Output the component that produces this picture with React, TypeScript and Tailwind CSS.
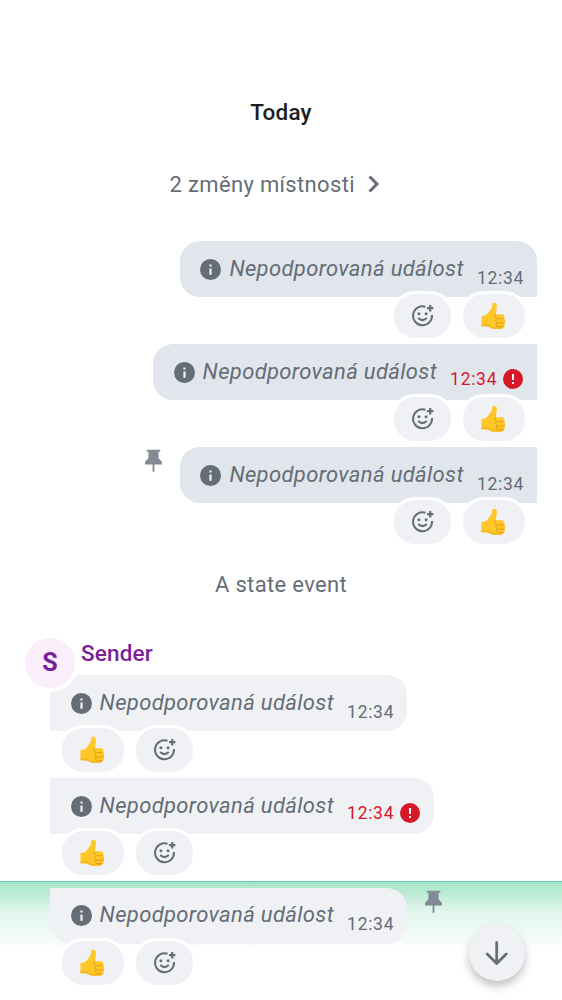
import React from 'react';

const Smile = () => (
  <svg className="h-6 w-6" viewBox="0 0 24 24" fill="none" stroke="#656d77" strokeWidth="2">
    <path d="M14.5 2.7A9.5 9.5 0 1 0 21 11" />
    <circle cx="7.9" cy="9.8" r="1.5" fill="#656d77" stroke="none" />
    <circle cx="15.1" cy="9.8" r="1.5" fill="#656d77" stroke="none" />
    <path d="M7.2 14q4.3 4.2 8.6 0" />
    <path d="M19.2 1v6.4M16 4.2h6.4" strokeWidth="2.2" />
  </svg>
);

const Thumb = () => (
  <svg className="h-8 w-8" viewBox="0 0 32 32" role="img" aria-label="👍">
    <path d="M3.5 16c2.8 0 5-.8 6.3-2.7 1.5-2.2 3.5-4 4-6.3l.6-3c.4-1.7 3.8-1.6 4.3.7.5 2.6-.3 5.8-.9 9.5h5.4c2 0 3.2.9 3.2 2.2 0 .8-.4 1.4-.9 1.8 1.3.6 1.9 1.4 1.9 2.5 0 1-.5 1.8-1.2 2.2.7.5.9 1.2.7 2-.2.9-.8 1.4-1.6 1.7.3 1.5-.8 2.1-2.6 2.1H16c-3 0-4.6-2.2-7.3-2.5H3.5z" fill="#ffc727" />
    <path d="M3.5 24.5v1.7h5.2c2.7.3 4.3 2.5 7.3 2.5h6.7c1.8 0 2.9-.6 2.6-2.1-1.8 1-6 .8-8.8.7-2.8 0-4.8-2.6-7.5-2.8z" fill="#f6b51e" />
    <path d="M17.8 14.2c-.7.7-1.2 1.4-1.2 2.3M26 18.2c-2 .8-5.2.7-6.5.3-1.1-.3-2-.7-2-1.4M26.4 22.8c-2 .7-5.3.7-7.2.1M25.5 26.4c-1.9.4-4.6.3-6.3-.2M18.8 18.6c-1.3.8-1.3 3.3.4 4.3-1.2.8-1 2.7 0 3.3" fill="none" stroke="#e49c13" strokeWidth="1" strokeLinecap="round" />
  </svg>
);

const Pin = () => (
  <svg className="h-[27px] w-[27px] shrink-0" viewBox="0 0 24 24" fill="#818a95">
    <path d="M6 2.5h12v1.7h-1.5V10l3 3v2.5h-6.7V22h-1.6v-6.5H4.5V13l3-3V4.2H6z" />
  </svg>
);

const Info = () => (
  <svg className="h-[21px] w-[21px] shrink-0" viewBox="0 0 21 21">
    <circle cx="10.5" cy="10.5" r="10.5" fill="#656d77" />
    <path d="M9.4 9.4h2.2v6.3H9.4zM9.4 5.4h2.2v2.1H9.4z" fill="#f0f1f5" />
  </svg>
);

const Alert = () => (
  <svg className="ml-[5.5px] h-5 w-5" viewBox="0 0 20 20">
    <circle cx="10" cy="10" r="10" fill="#d51928" />
    <path d="M9 5h2v6H9zM9 13h2v2H9z" fill="#f0f1f5" />
  </svg>
);

type Props = { mine?: boolean; failed?: boolean; pinned?: boolean; corners: string };

function Message({ mine, failed, pinned, corners }: Props) {
  return (
    <div className={`flex h-[103px] flex-col ${mine ? 'items-end pr-[25px]' : 'items-start pl-[50px]'}`}>
      <div className={`flex h-14 shrink-0 items-start ${mine ? '' : 'flex-row-reverse'}`}>
        {pinned && <div className={mine ? 'mr-[13.5px]' : 'ml-[13px]'}><Pin /></div>}
        <div className={`flex h-14 items-center ${failed ? 'w-[384px]' : 'w-[357px]'} ${corners} ${mine ? 'bg-[#e1e5ec]' : 'bg-[#f0f1f5]'} ${mine && !failed ? 'pl-[20.4px]' : 'pl-[20.6px]'}`}>
          <Info />
          <span className="ml-2 w-[247.5px] whitespace-nowrap pb-px text-[22px] italic leading-7 tracking-[0.34px] text-[#656d77]">Nepodporovaná událost</span>
          <span className={`flex items-center text-[17.5px] leading-5 tracking-[0.7px] ${failed ? 'pt-[13px] text-[#d51928]' : 'pt-[17px] text-[#656d77]'}`}>
            12:34{failed && <Alert />}
          </span>
        </div>
      </div>
      <div className={`relative -mt-[6px] flex gap-[6px] ${mine ? 'mr-[9px] flex-row-reverse' : 'ml-[9px]'}`}>
        <div className="flex h-[50px] w-[68px] items-center justify-center rounded-[24px] border-[3.5px] border-white bg-[#f0f1f5]"><Thumb /></div>
        <div className="flex h-[50px] w-[63px] items-center justify-center rounded-[24px] border-[3.5px] border-white bg-[#f0f1f5]"><Smile /></div>
      </div>
    </div>
  );
}

export default function App() {
  return (
    <main className="relative flex h-[1000px] w-[562px] flex-col overflow-hidden bg-white font-['Roboto','Noto_Sans',sans-serif]">
      <h1 className="mt-[98px] text-center text-[22.5px] font-medium leading-7 tracking-[0.2px] text-[#1b1d22]">Today</h1>
      <div className="mt-11 flex h-7 items-center pl-[169.5px] text-[22px] tracking-[0.34px] text-[#656d77]">
        2 změny místnosti
        <svg className="ml-3 h-[18px] w-[14px]" viewBox="0 0 14 18" fill="none" stroke="#656d77" strokeWidth="3"><path d="m2.5 1.5 7.5 7.5-7.5 7.5" /></svg>
      </div>
      <section className="mt-[43px]">
        <Message mine corners="rounded-t-[20px] rounded-bl-[20px]" />
        <Message mine failed corners="rounded-l-[20px]" />
        <Message mine pinned corners="rounded-l-[20px]" />
      </section>
      <p className="mt-[21px] text-center text-[22px] leading-7 tracking-[0.34px] text-[#656d77]">A state event</p>
      <div className="flex h-[76px] pl-[21px] pt-[35px]">
        <div className="relative z-10 -mb-6 flex h-[58px] w-[58px] items-center justify-center rounded-full border-4 border-white bg-[#faeefb] text-[25px] font-bold text-[#7a1f98]">S</div>
        <span className="ml-[2px] mt-[5px] text-[22.5px] font-medium leading-7 tracking-[0.15px] text-[#7a1f98]">Sender</span>
      </div>
      <section>
        <Message corners="rounded-r-[20px]" />
        <Message failed corners="rounded-r-[20px]" />
        <div className="h-[119px] border-t border-[#56cca8] bg-linear-to-b from-[#a5e5c6] via-[#e1f6ec] via-25% to-white to-60% pt-[5.5px]"><Message pinned corners="rounded-r-[20px] rounded-bl-[20px]" /></div>
      </section>
      <button className="absolute left-[468.5px] top-[925px] flex h-14 w-14 items-center justify-center rounded-full bg-[#f0f1f5] shadow-[0_5px_10px_rgba(0,0,0,0.25)]">
        <svg className="h-6 w-6" viewBox="0 0 24 24" fill="none" stroke="#656d77" strokeWidth="2.8" strokeLinecap="round" strokeLinejoin="round"><path d="M11.7 1.5v21M2.2 13l9.5 9.5 9.5-9.5" /></svg>
      </button>
    </main>
  );
}
